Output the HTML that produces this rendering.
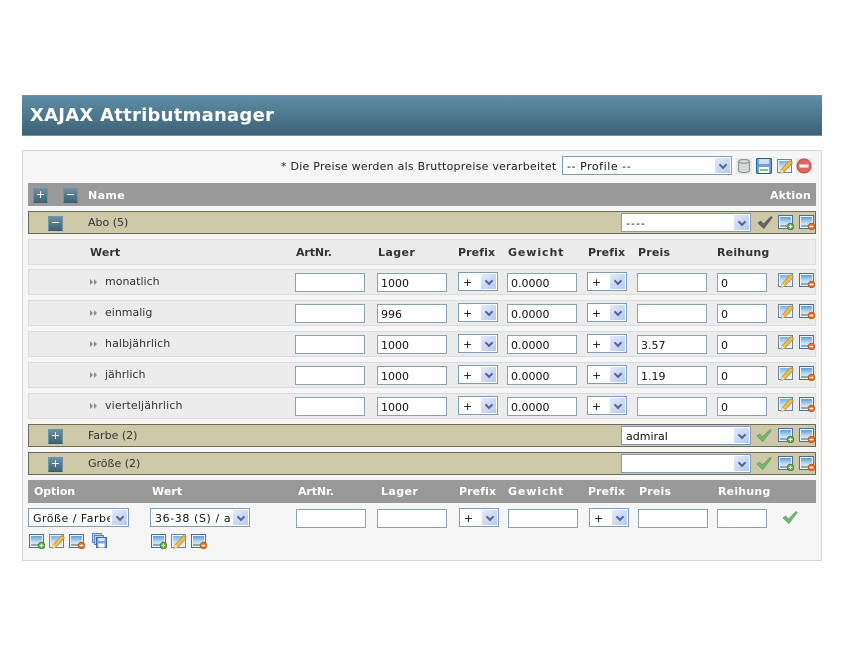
<!DOCTYPE html>
<html><head><meta charset="utf-8"><style>
html,body{margin:0;padding:0;background:#fff;width:845px;height:657px;overflow:hidden}
body{font-family:"DejaVu Sans","Liberation Sans",sans-serif;font-size:11px;color:#333;position:relative}
div,svg{position:absolute;box-sizing:border-box}
.t{white-space:nowrap;line-height:13px}
.hd{font-weight:bold;letter-spacing:.2px}
.w{color:#fff}
.g{background:#999;left:28px;width:788px;height:23px}
.o{background:#cdc8a8;border:1px solid #6e6c5c;left:28px;width:788px;height:23px}
.r{background:#ececec;border:1px solid #dcdcdc;left:28px;width:788px;height:26px}
.i{background:#fff;border:1px solid #8aa1ae;height:19px;color:#111;padding:3px 0 0 3px;line-height:13px;white-space:nowrap;overflow:hidden;font-size:11px}
.s{background:#fff;border:1px solid #7f9db9;height:19px;color:#111;padding:3px 0 0 4px;line-height:13px;white-space:nowrap;overflow:hidden;font-size:11px}
.a{top:1px;right:1px;width:15px;height:15px;background:linear-gradient(135deg,#e3ebfb,#b6c9ee);box-shadow:-2px 0 0 #fff}
.a:after{content:"";position:absolute;left:5px;top:4px;width:4px;height:4px;border:solid #4d6496;border-width:0 2px 2px 0;transform:rotate(45deg)}
.b{width:15px;height:15px;background:linear-gradient(#6a8ea3,#3f6274);color:#fff;border:1px solid #6f93a7;border-bottom-color:#3c5a6b;text-align:center;line-height:12px;font-size:11px}
</style></head><body>
<svg width="0" height="0" style="left:0;top:0"><defs>
<linearGradient id="sky" x1="0" y1="0" x2="0" y2="1"><stop offset="0" stop-color="#5b9fdc"/><stop offset=".6" stop-color="#c4def2"/><stop offset="1" stop-color="#e8eef0"/></linearGradient>
<g id="pic"><rect x=".5" y="1.5" width="14" height="13" fill="#eef3f7" stroke="#4f6d90"/><rect x="2" y="3" width="11" height="10" fill="url(#sky)"/><rect x="2" y="11" width="11" height="2" fill="#93a8b4"/></g>
<g id="add"><use href="#pic"/><circle cx="12.5" cy="12.5" r="3.4" fill="#63a848" stroke="#3f7d2e" stroke-width=".7"/><path d="M10.6 12.5h3.8M12.5 10.6v3.8" stroke="#fff" stroke-width="1.1"/></g>
<g id="del"><use href="#pic"/><circle cx="12.5" cy="12.5" r="3.4" fill="#e0702a" stroke="#b8521a" stroke-width=".7"/><path d="M10.6 12.5h3.8" stroke="#fff" stroke-width="1.4"/></g>
<g id="edit"><rect x=".5" y="1.5" width="14" height="13" fill="#eef3f7" stroke="#6a84a2"/><rect x="2" y="3" width="11" height="10" fill="url(#sky)" opacity=".8"/><path d="M3 15.5l1.2-4L12.8 2.5l2.7 2.4L7 14z" fill="#ecc04e" stroke="#b98a2a" stroke-width=".7"/><path d="M3 15.5l1.2-4L7 14z" fill="#f3dcae"/></g>
<g id="ok"><path d="M1 9l2.5-2 3 3L14 2.5l1.3 1L6.8 14.5z" fill="#78b873" stroke="#559a52" stroke-width=".6"/></g>
<g id="okg"><path d="M1 9l2.5-2 3 3L14 2.5l1.3 1L6.8 14.5z" fill="#666" stroke="#555" stroke-width=".6"/></g>
<g id="db"><rect width="16" height="16" fill="#e6eaea"/><path d="M2.5 3.5c0-2.6 11-2.6 11 0v9c0 2.6-11 2.6-11 0z" fill="#d6d8d8" stroke="#8b8f90"/><path d="M2.5 3.5c0 2.4 11 2.4 11 0" fill="none" stroke="#8b8f90"/></g>
<g id="save"><rect x=".5" y=".5" width="15" height="15" rx="1" fill="#6aa0dc" stroke="#2f5d9c"/><rect x="3" y="1" width="10" height="5" fill="#cfe0f2"/><rect x="3" y="9" width="10" height="6" fill="#fff"/><rect x="4" y="11" width="8" height="2" fill="#8cc084"/></g>
<g id="stop"><rect width="16" height="16" fill="#e6eaea"/><circle cx="8" cy="8" r="7" fill="#e2665f" stroke="#b94c48"/><rect x="3.5" y="6.5" width="9" height="3" fill="#fff"/></g>
<g id="copy"><rect x=".5" y=".5" width="9" height="9" fill="#bcd2ec" stroke="#5f81b0"/><rect x="2.5" y="2.5" width="9" height="9" fill="#bcd2ec" stroke="#5f81b0"/><rect x="4.5" y="4.5" width="10" height="10" fill="#7da7da" stroke="#3a6aa8"/><rect x="6.5" y="5" width="6" height="3" fill="#dfe9f5"/><rect x="6.5" y="10.5" width="6" height="4" fill="#fff"/></g>
<g id="arr"><path d="M0 1l3 3-3 3zM4 1l3 3-3 3z" fill="#8a8a8a"/></g>
</defs></svg>

<div style="left:22px;top:95px;width:800px;height:41px;background:linear-gradient(#5f8ea6,#3c6276);border:1px solid #7a8f9b;border-width:1px 0 1px 0"></div>
<div class="t" style="left:30px;top:105px;font-size:18px;line-height:21px;font-weight:bold;color:#fff;letter-spacing:.25px">XAJAX Attributmanager</div>

<div style="left:22px;top:150px;width:800px;height:411px;background:#f6f6f6;border:1px solid #d6d6d6"></div>

<div class="t" style="left:281px;top:160px;color:#222;letter-spacing:.25px">* Die Preise werden als Bruttopreise verarbeitet</div>
<div class="s" style="left:562px;top:156px;width:170px;letter-spacing:.55px">-- Profile --<div class="a"></div></div>
<svg style="left:736px;top:158px" width="16" height="16"><use href="#db"/></svg>
<svg style="left:756px;top:158px" width="16" height="16"><use href="#save"/></svg>
<svg style="left:777px;top:158px" width="16" height="16"><use href="#edit"/></svg>
<svg style="left:796px;top:158px" width="16" height="16"><use href="#stop"/></svg>

<div class="g" style="top:183px"></div>
<div class="b" style="left:33px;top:188px">+</div>
<div class="b" style="left:63px;top:188px">−</div>
<div class="t hd w" style="left:88px;top:189px;letter-spacing:.4px">Name</div>
<div class="t hd w" style="left:770px;top:189px;letter-spacing:.1px">Aktion</div>

<div class="o" style="top:211px"></div>
<div class="b" style="left:48px;top:216px">−</div>
<div class="t" style="left:88px;top:216px">Abo (5)</div>
<div class="s" style="left:621px;top:213px;width:130px;letter-spacing:1px">----<div class="a"></div></div>
<svg style="left:757px;top:214px" width="16" height="16"><use href="#okg"/></svg>
<svg style="left:778px;top:214px" width="16" height="16"><use href="#add"/></svg>
<svg style="left:799px;top:214px" width="16" height="16"><use href="#del"/></svg>

<div class="r" style="top:239px"></div>
<div class="t hd" style="left:90px;top:246px;letter-spacing:.1px">Wert</div>
<div class="t hd" style="left:296px;top:246px;letter-spacing:-.1px">ArtNr.</div>
<div class="t hd" style="left:378px;top:246px;letter-spacing:.4px">Lager</div>
<div class="t hd" style="left:458px;top:246px;letter-spacing:.1px">Prefix</div>
<div class="t hd" style="left:508px;top:246px;letter-spacing:.9px">Gewicht</div>
<div class="t hd" style="left:588px;top:246px;letter-spacing:.1px">Prefix</div>
<div class="t hd" style="left:638px;top:246px">Preis</div>
<div class="t hd" style="left:717px;top:246px">Reihung</div>

<!-- row 1 -->
<div class="r" style="top:269px"></div>
<svg style="left:90px;top:278px" width="8" height="8"><use href="#arr"/></svg>
<div class="t" style="left:105px;top:275px">monatlich</div>
<div class="i" style="left:295px;top:273px;width:70px"></div>
<div class="i" style="left:377px;top:273px;width:70px">1000</div>
<div class="s" style="left:458px;top:272px;width:40px">+<div class="a"></div></div>
<div class="i" style="left:507px;top:273px;width:70px">0.0000</div>
<div class="s" style="left:587px;top:272px;width:40px">+<div class="a"></div></div>
<div class="i" style="left:637px;top:273px;width:70px"></div>
<div class="i" style="left:717px;top:273px;width:50px">0</div>
<svg style="left:778px;top:272px" width="16" height="16"><use href="#edit"/></svg>
<svg style="left:799px;top:272px" width="16" height="16"><use href="#del"/></svg>

<!-- row 2 -->
<div class="r" style="top:300px"></div>
<svg style="left:90px;top:309px" width="8" height="8"><use href="#arr"/></svg>
<div class="t" style="left:105px;top:306px">einmalig</div>
<div class="i" style="left:295px;top:304px;width:70px"></div>
<div class="i" style="left:377px;top:304px;width:70px">996</div>
<div class="s" style="left:458px;top:303px;width:40px">+<div class="a"></div></div>
<div class="i" style="left:507px;top:304px;width:70px">0.0000</div>
<div class="s" style="left:587px;top:303px;width:40px">+<div class="a"></div></div>
<div class="i" style="left:637px;top:304px;width:70px"></div>
<div class="i" style="left:717px;top:304px;width:50px">0</div>
<svg style="left:778px;top:303px" width="16" height="16"><use href="#edit"/></svg>
<svg style="left:799px;top:303px" width="16" height="16"><use href="#del"/></svg>

<!-- row 3 -->
<div class="r" style="top:331px"></div>
<svg style="left:90px;top:340px" width="8" height="8"><use href="#arr"/></svg>
<div class="t" style="left:105px;top:337px;letter-spacing:.1px">halbjährlich</div>
<div class="i" style="left:295px;top:335px;width:70px"></div>
<div class="i" style="left:377px;top:335px;width:70px">1000</div>
<div class="s" style="left:458px;top:334px;width:40px">+<div class="a"></div></div>
<div class="i" style="left:507px;top:335px;width:70px">0.0000</div>
<div class="s" style="left:587px;top:334px;width:40px">+<div class="a"></div></div>
<div class="i" style="left:637px;top:335px;width:70px">3.57</div>
<div class="i" style="left:717px;top:335px;width:50px">0</div>
<svg style="left:778px;top:334px" width="16" height="16"><use href="#edit"/></svg>
<svg style="left:799px;top:334px" width="16" height="16"><use href="#del"/></svg>

<!-- row 4 -->
<div class="r" style="top:362px"></div>
<svg style="left:90px;top:371px" width="8" height="8"><use href="#arr"/></svg>
<div class="t" style="left:105px;top:368px">jährlich</div>
<div class="i" style="left:295px;top:366px;width:70px"></div>
<div class="i" style="left:377px;top:366px;width:70px">1000</div>
<div class="s" style="left:458px;top:365px;width:40px">+<div class="a"></div></div>
<div class="i" style="left:507px;top:366px;width:70px">0.0000</div>
<div class="s" style="left:587px;top:365px;width:40px">+<div class="a"></div></div>
<div class="i" style="left:637px;top:366px;width:70px">1.19</div>
<div class="i" style="left:717px;top:366px;width:50px">0</div>
<svg style="left:778px;top:365px" width="16" height="16"><use href="#edit"/></svg>
<svg style="left:799px;top:365px" width="16" height="16"><use href="#del"/></svg>

<!-- row 5 -->
<div class="r" style="top:393px"></div>
<svg style="left:90px;top:402px" width="8" height="8"><use href="#arr"/></svg>
<div class="t" style="left:105px;top:399px;letter-spacing:.15px">vierteljährlich</div>
<div class="i" style="left:295px;top:397px;width:70px"></div>
<div class="i" style="left:377px;top:397px;width:70px">1000</div>
<div class="s" style="left:458px;top:396px;width:40px">+<div class="a"></div></div>
<div class="i" style="left:507px;top:397px;width:70px">0.0000</div>
<div class="s" style="left:587px;top:396px;width:40px">+<div class="a"></div></div>
<div class="i" style="left:637px;top:397px;width:70px"></div>
<div class="i" style="left:717px;top:397px;width:50px">0</div>
<svg style="left:778px;top:396px" width="16" height="16"><use href="#edit"/></svg>
<svg style="left:799px;top:396px" width="16" height="16"><use href="#del"/></svg>

<!-- Farbe -->
<div class="o" style="top:424px"></div>
<div class="b" style="left:48px;top:429px">+</div>
<div class="t" style="left:88px;top:429px">Farbe (2)</div>
<div class="s" style="left:621px;top:426px;width:130px">admiral<div class="a"></div></div>
<svg style="left:756px;top:427px" width="16" height="16"><use href="#ok"/></svg>
<svg style="left:778px;top:427px" width="16" height="16"><use href="#add"/></svg>
<svg style="left:799px;top:427px" width="16" height="16"><use href="#del"/></svg>

<!-- Groesse -->
<div class="o" style="top:452px"></div>
<div class="b" style="left:48px;top:457px">+</div>
<div class="t" style="left:88px;top:457px">Größe (2)</div>
<div class="s" style="left:621px;top:454px;width:130px"><div class="a"></div></div>
<svg style="left:756px;top:455px" width="16" height="16"><use href="#ok"/></svg>
<svg style="left:778px;top:455px" width="16" height="16"><use href="#add"/></svg>
<svg style="left:799px;top:455px" width="16" height="16"><use href="#del"/></svg>

<!-- bottom bar -->
<div class="g" style="top:480px"></div>
<div class="t hd w" style="left:34px;top:485px;letter-spacing:-.1px">Option</div>
<div class="t hd w" style="left:152px;top:485px;letter-spacing:.1px">Wert</div>
<div class="t hd w" style="left:298px;top:485px;letter-spacing:-.1px">ArtNr.</div>
<div class="t hd w" style="left:381px;top:485px;letter-spacing:.4px">Lager</div>
<div class="t hd w" style="left:459px;top:485px;letter-spacing:.1px">Prefix</div>
<div class="t hd w" style="left:508px;top:485px;letter-spacing:.9px">Gewicht</div>
<div class="t hd w" style="left:588px;top:485px;letter-spacing:.1px">Prefix</div>
<div class="t hd w" style="left:639px;top:485px">Preis</div>
<div class="t hd w" style="left:718px;top:485px">Reihung</div>

<div class="s" style="left:28px;top:508px;width:101px;letter-spacing:.5px">Größe / Farbe<div class="a"></div></div>
<div class="s" style="left:150px;top:508px;width:100px;letter-spacing:.6px">36-38 (S) / a<div class="a"></div></div>
<div class="i" style="left:296px;top:509px;width:70px"></div>
<div class="i" style="left:377px;top:509px;width:70px"></div>
<div class="s" style="left:459px;top:508px;width:40px">+<div class="a"></div></div>
<div class="i" style="left:508px;top:509px;width:70px"></div>
<div class="s" style="left:589px;top:508px;width:40px">+<div class="a"></div></div>
<div class="i" style="left:638px;top:509px;width:70px"></div>
<div class="i" style="left:717px;top:509px;width:50px"></div>
<svg style="left:782px;top:509px" width="16" height="16"><use href="#ok"/></svg>

<svg style="left:29px;top:533px" width="16" height="16"><use href="#add"/></svg>
<svg style="left:49px;top:533px" width="16" height="16"><use href="#edit"/></svg>
<svg style="left:69px;top:533px" width="16" height="16"><use href="#del"/></svg>
<svg style="left:92px;top:533px" width="16" height="16"><use href="#copy"/></svg>
<svg style="left:151px;top:533px" width="16" height="16"><use href="#add"/></svg>
<svg style="left:171px;top:533px" width="16" height="16"><use href="#edit"/></svg>
<svg style="left:191px;top:533px" width="16" height="16"><use href="#del"/></svg>
</body></html>
